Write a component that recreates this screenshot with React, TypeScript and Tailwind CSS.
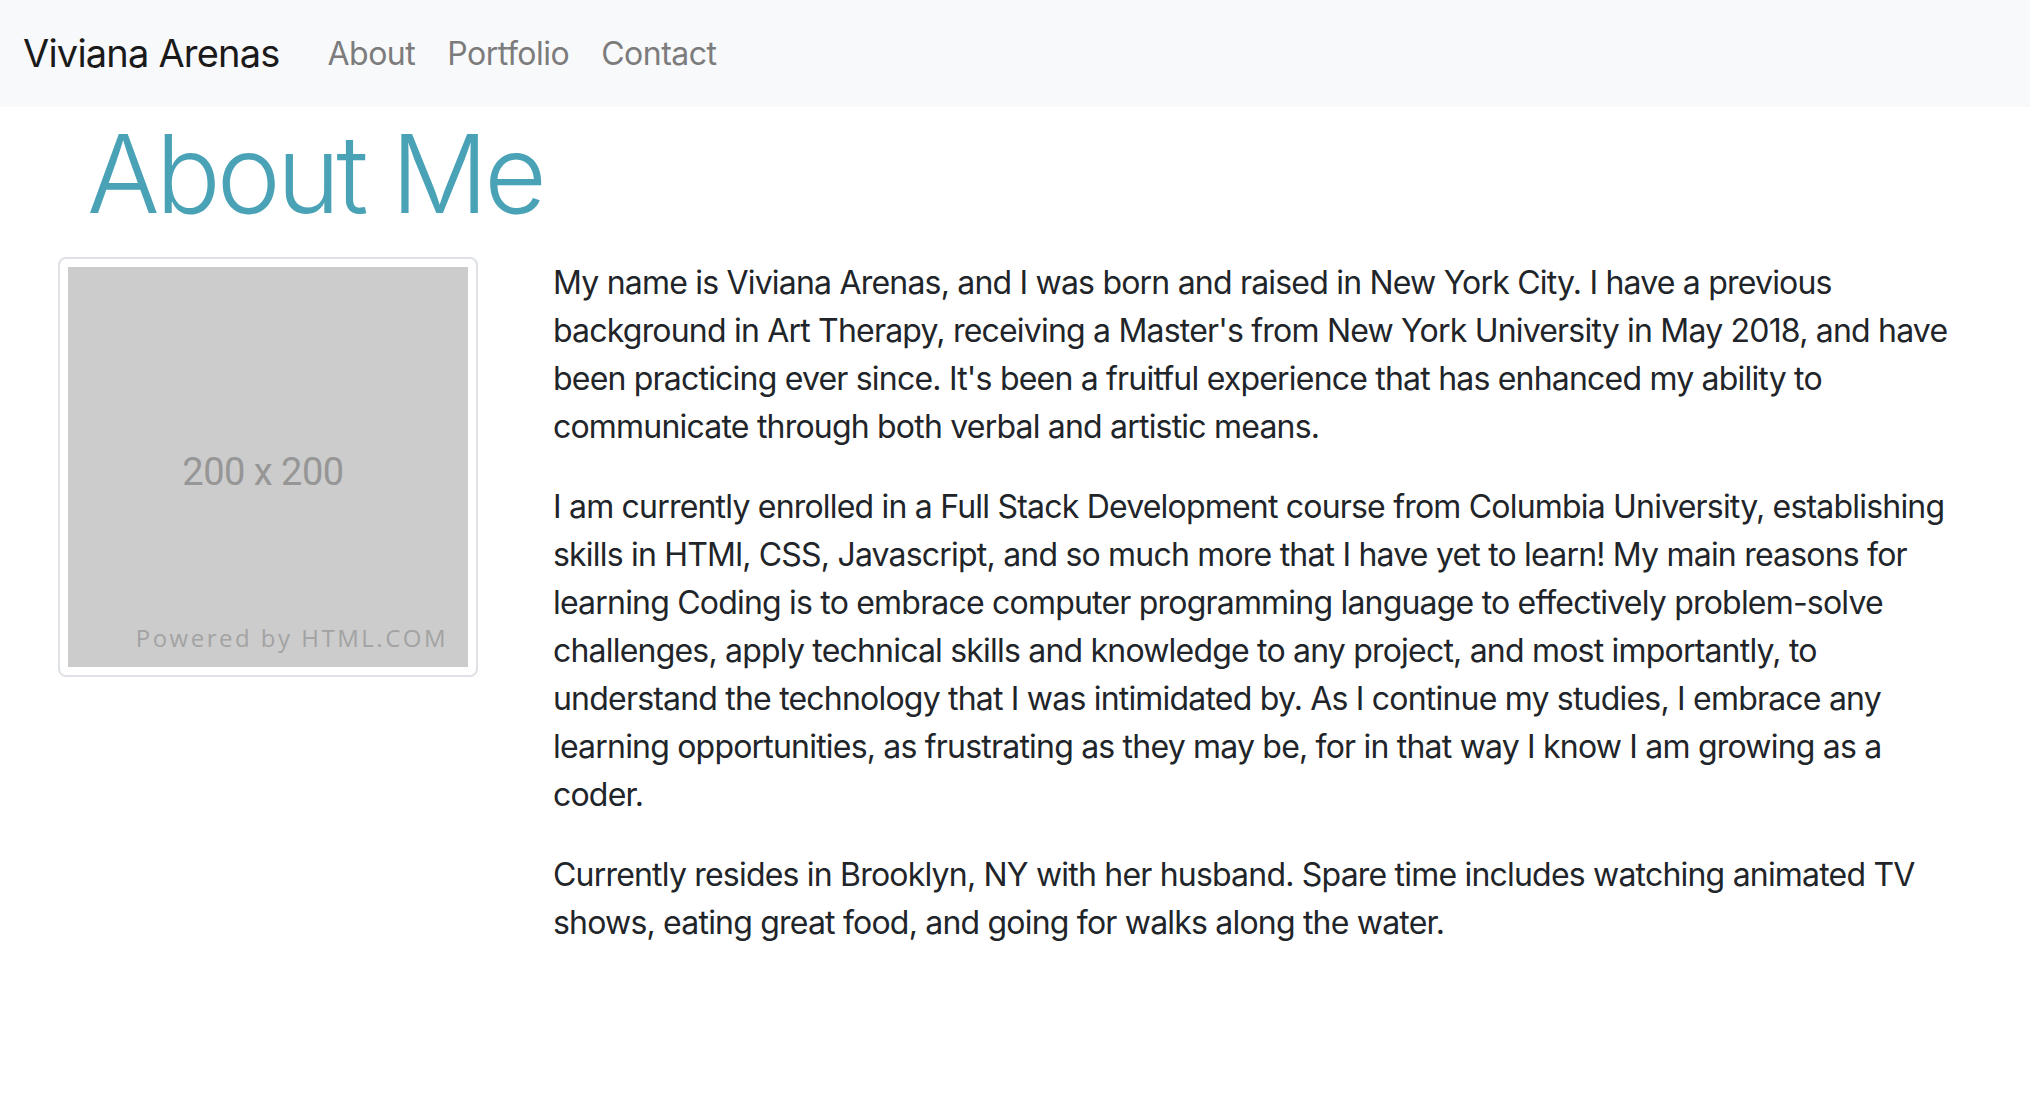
export default function App() {
  return (
    <div className="min-h-screen bg-white font-['Inter','Liberation_Sans',sans-serif] text-[#212529]">
      <header className="flex h-[107px] items-center bg-[#f8f9fa] pl-[23px]">
        <a href="#" className="mr-[32px] text-[38px] tracking-[-0.8px] text-[#1a1a1a]">
          Viviana Arenas
        </a>
        <nav className="flex">
          <a href="#" className="px-[16px] text-[32px] tracking-[-0.5px] text-[#7c7c7d]">
            About
          </a>
          <a href="#" className="px-[16px] text-[32px] tracking-[-0.5px] text-[#7c7c7d]">
            Portfolio
          </a>
          <a href="#" className="px-[16px] text-[32px] tracking-[-0.5px] text-[#7c7c7d]">
            Contact
          </a>
        </nav>
      </header>

      <main>
        <h1 className="mb-[16px] pl-[87px] text-[108px] leading-[134px] font-light tracking-[-4px] text-[#49a2b5]">
          About Me
        </h1>

        <div className="flex items-start pl-[58px]">
          <div className="w-[420px] shrink-0 rounded-[8px] border-2 border-[#dee2e6] bg-white p-[8px]">
            <div className="relative flex h-[400px] w-[400px] items-center justify-center bg-[#cccccc]">
              <span className="mt-[10px] mr-[10px] font-['Roboto',sans-serif] text-[38px] tracking-[-0.5px] text-[#969696]">
                200 x 200
              </span>
              <span className="absolute right-[20px] bottom-[11px] font-['Open_Sans',sans-serif] text-[24px] tracking-[2.5px] text-[#a3a3a3]">
                Powered by HTML.COM
              </span>
            </div>
          </div>

          <div className="mt-[2px] ml-[75px] w-[1420px] text-[32px] leading-[48px] tracking-[-0.8px]">
            <p className="mb-[32px]">
              My name is Viviana Arenas, and I was born and raised in New York City. I have a previous
              background in Art Therapy, receiving a Master's from New York University in May 2018, and
              have been practicing ever since. It's been a fruitful experience that has enhanced my
              ability to communicate through both verbal and artistic means.
            </p>
            <p className="mb-[32px]">
              I am currently enrolled in a Full Stack Development course from Columbia University,
              establishing skills in HTMl, CSS, Javascript, and so much more that I have yet to learn! My
              main reasons for learning Coding is to embrace computer programming language to
              effectively problem-solve challenges, apply technical skills and knowledge to any project,
              and most importantly, to understand the technology that I was intimidated by. As I
              continue my studies, I embrace any learning opportunities, as frustrating as they may be,
              for in that way I know I am growing as a coder.
            </p>
            <p className="mb-[32px]">
              Currently resides in Brooklyn, NY with her husband. Spare time includes watching animated
              TV shows, eating great food, and going for walks along the water.
            </p>
          </div>
        </div>
      </main>
    </div>
  );
}
